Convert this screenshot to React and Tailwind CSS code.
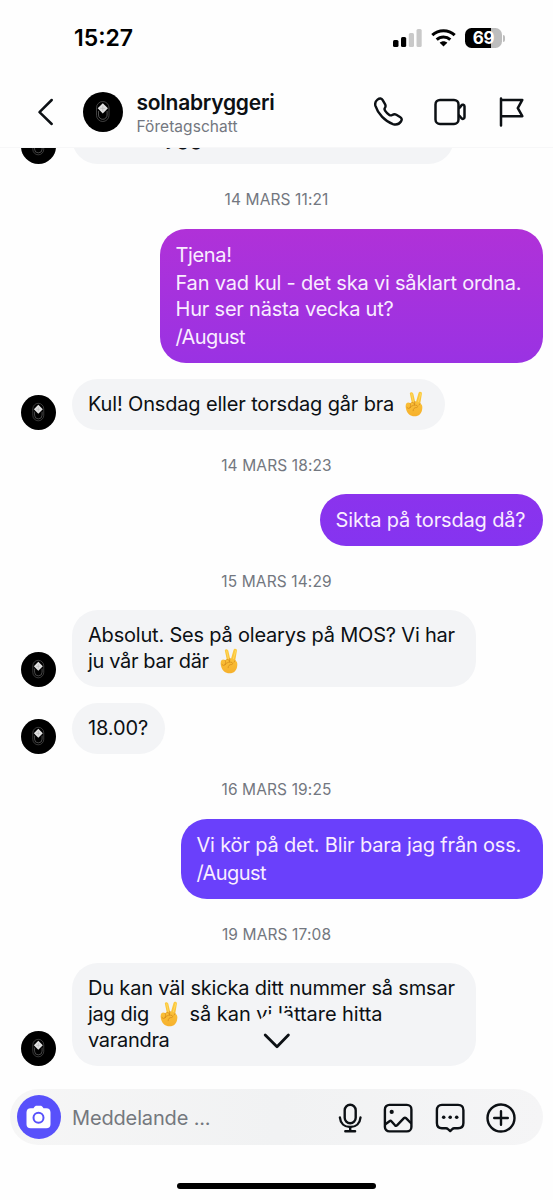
import React from 'react';

const INK = 'stroke-[#0c1014]';

function Peace() {
  return (
    <svg viewBox="0 0 20 28" className="relative -top-[2.5px] mx-[5.5px] -my-1 inline-block h-[26px] w-[18.5px] align-[-4px]" role="img" aria-label="✌️">
      <defs>
        <linearGradient id="skin" x1="0" y1="0" x2="0" y2="1">
          <stop offset="0" stopColor="#fccb40" />
          <stop offset="1" stopColor="#f6b02c" />
        </linearGradient>
      </defs>
      <path
        d="M5.2 2.6C5.700.6 8.400.8 9 3l1.900 8.2 1.100.2L14.600 2C15.300 0 18.700.6 18.300 2.800L16.500 13.400C18.200 14.500 19 16 18.700 18.500 18.300 24 15.200 27.300 10.400 27.300 5.500 27.300 2.600 24.500 1.400 20.500.5 17.500.4 14.500 1.600 13.200 2.700 12 4.500 12.200 5.500 13.200L7.200 11.800Z"
        fill="url(#skin)"
      />
      <path
        d="M10.700 11.200 10.200 15M7.400 12.500C8.500 12 10 12.700 10.100 14.200M5.500 13.200C6.500 14.800 6.300 17 5.200 18.200M2 17.500C3 19.400 5 19.200 5.800 17.600M5.800 17.600C7.500 15.300 10.600 14.600 13 15.600 14.200 16.200 13.700 18 12.300 17.900 10.200 17.700 8.900 19 8.800 21.300M16.300 13.400 15.200 15.200"
        fill="none"
        stroke="#d48a1c"
        strokeWidth="0.8"
        strokeLinecap="round"
      />
      <path d="M7.200 3.200 9 11.500M17 2.800 14.400 11.500" stroke="#ffe06a" strokeWidth="0.8" strokeLinecap="round" fill="none" />
    </svg>
  );
}

function Avatar({ className }) {
  return (
    <svg viewBox="0 0 40 40" className={`shrink-0 ${className}`}>
      <circle cx="20" cy="20" r="20" fill="#000" />
      <rect x="13.500" y="9.500" width="12.500" height="20" rx="6.250" fill="none" stroke="#5c5c5c" strokeWidth="0.700" />
      <path d="M15.500 19v4a4.300 4.300 0 0 0 8.600 0v-4" fill="none" stroke="#8a8a8a" strokeWidth="0.600" />
      <path d="M19.800 11.200 24.900 16.300 19.800 21.400 14.700 16.300Z" fill="#e2e2e2" />
      <path d="M19.800 13.700v5.200M17.300 16.300h5" stroke="#b5b5b5" strokeWidth="0.700" />
    </svg>
  );
}

function Stamp({ children, className = 'h-16' }) {
  return (
    <div className={`flex shrink-0 items-center justify-center pt-[7px] text-[15.5px] text-[#737780] ${className}`}>
      <span className="whitespace-nowrap tracking-[0.12px]">{children}</span>
    </div>
  );
}

function Received({ children, className }) {
  return (
    <div className="flex shrink-0 items-end pl-[21px]">
      <Avatar className="h-[35px] w-[35px]" />
      <div className={`ml-4 rounded-[26px] bg-[#f3f4f6] pl-4 pt-[12px] leading-[26px] text-[#0c1014] ${className}`}>{children}</div>
    </div>
  );
}

function Sent({ children, className }) {
  return (
    <div className="flex shrink-0 justify-end pr-[10px]">
      <div className={`rounded-[26px] pl-[15.5px] pt-[12.5px] leading-[26px] text-[#f9edff] ${className}`}>{children}</div>
    </div>
  );
}

function Line({ children, className = 'tracking-[-0.2px]' }) {
  return <p className={`whitespace-nowrap ${className}`}>{children}</p>;
}

function StatusBar() {
  return (
    <div className="flex h-[76px] shrink-0 items-center justify-between pl-[74px] pr-[48px]">
      <span className="text-[23px] font-semibold leading-none tracking-[0px] text-black">15:27</span>
      <div className="flex items-center">
        <svg viewBox="0 0 29 18" className="h-[18px] w-[29px]">
          <rect x="0" y="11" width="5.500" height="7" rx="1.500" fill="#000" />
          <rect x="8" y="8" width="5.200" height="10" rx="1.500" fill="#000" />
          <rect x="15.800" y="4" width="5.200" height="14" rx="1.500" fill="#c9c9c9" />
          <rect x="23.500" y="0" width="5.200" height="18" rx="1.500" fill="#c9c9c9" />
        </svg>
        <svg viewBox="0 0 25 18" className="ml-[9px] h-[18px] w-[25px]" fill="none" stroke="#000" strokeWidth="3">
          <path d="M1.300 6.200C7.600.2 17.400.2 23.700 6.200" />
          <path d="M5.700 10.700C9.600 7 15.400 7 19.300 10.700" />
          <path d="M12.500 17.500 8.700 13.800C10.800 11.800 14.200 11.800 16.300 13.800Z" fill="#000" stroke="none" />
        </svg>
        <div className="ml-[9px] flex h-[20px] w-[37px] items-center justify-center rounded-[6.5px] bg-linear-to-r from-black from-69% to-[#bdbdbd] to-69%">
          <span className="text-[17px] font-bold leading-none tracking-[-0.3px] text-white">69</span>
        </div>
        <div className="ml-[1px] h-[7px] w-[2px] rounded-r-full bg-[#bdbdbd]" />
      </div>
    </div>
  );
}

function Header() {
  return (
    <header className="flex h-[72px] shrink-0 items-center border-b border-[#f7f7f8] pl-[37px] pr-[29px]">
      <svg viewBox="0 0 17 28" className="h-[28px] w-[17px]" fill="none" strokeWidth="2.500" strokeLinecap="round" strokeLinejoin="round">
        <path className={INK} d="M14.700 2 2.500 14.200 14.700 26" />
      </svg>
      <Avatar className="ml-[29px] h-[40px] w-[40px]" />
      <div className="ml-[13.5px] flex-1 pt-[5px]">
        <h1 className="text-[21px] font-semibold leading-[24px] tracking-[-0.25px] text-[#0c1014]">solnabryggeri</h1>
        <p className="text-[15.5px] leading-[23px] tracking-[0.05px] text-[#737780]">Företagschatt</p>
      </div>
      <svg viewBox="0 0 30 30" className="h-[29px] w-[29px]" fill="none" strokeWidth="2.500" strokeLinejoin="round">
        <path className={INK} d="M3.600 2.700C6 .9 7.800 1.300 9 3.300L11.400 7.300C12.300 8.900 12.200 9.900 11.300 11.200 10.600 12.200 10.700 13 11.400 14 12.500 15.700 14 17.200 15.900 18.500 16.900 19.200 17.800 19.200 18.800 18.600 20.400 17.600 21.500 17.400 23.100 18.300L26.900 20.600C28.800 21.800 29.200 23.500 27.900 25.300 26.100 28 22.900 29 19.600 28 11.500 25.300 4 17.300 1.500 9.200.8 6.600 1.600 4.300 3.600 2.700Z" />
      </svg>
      <svg viewBox="0 0 32 28" className="ml-[31px] mr-px h-[28px] w-[32px]" fill="none" strokeWidth="2.500" strokeLinejoin="round">
        <rect className={INK} x="1.500" y="1.900" width="23" height="24" rx="4.500" />
        <path className={INK} d="M24.500 10.500C26 9.700 26.500 8.700 27.300 7.500 28.300 6.100 30.500 6.700 30.500 8.300V19.300C30.500 20.900 28.300 21.500 27.300 20.100 26.500 18.900 26 17.900 24.500 17.100" />
      </svg>
      <svg viewBox="0 0 25 30" className="ml-[32px] h-[30px] w-[25px]" fill="none" strokeWidth="2.500" strokeLinecap="round" strokeLinejoin="round">
        <path className={INK} d="M2 1.500V28.500M2 2.900H23.300L18.800 11.200 23.300 19.200H2" />
      </svg>
    </header>
  );
}

function Composer() {
  return (
    <div className="mx-[10px] flex h-[56px] shrink-0 items-center rounded-full bg-linear-to-r from-[#f6f6f6] via-[#f1f2f3] to-[#f5f5f6] pl-[6.5px] pr-[27px]">
      <div className="flex h-[44px] w-[44px] items-center justify-center rounded-full bg-[#5851fb]">
        <svg viewBox="0 0 25 24" className="h-[24px] w-[25px]">
          <path fill="#fff" d="M8 2.500C8.800 1.200 9.400.7 10.800.7H14.200C15.600.7 16.200 1.200 17 2.500L17.500 3.300H20.300C23 3.300 24.500 4.800 24.500 7.500V19.200C24.500 21.900 23 23.300 20.300 23.300H4.700C2 23.300.5 21.900.5 19.200V7.500C.5 4.800 2 3.300 4.700 3.300H7.500Z" />
          <circle cx="12.500" cy="12.800" r="5" fill="none" stroke="#5851fb" strokeWidth="2" />
        </svg>
      </div>
      <span className="ml-[11.5px] flex-1 whitespace-nowrap pt-px text-[20px] tracking-[-0.15px] text-[#74787e]">Meddelande ...</span>
      <svg viewBox="0 0 24 30" className="mt-px h-[30px] w-[24px]" fill="none" strokeWidth="2.400" strokeLinecap="round">
        <rect className={INK} x="6.700" y="1.800" width="11" height="18.500" rx="5.500" />
        <path className={INK} d="M1.900 14.500C2.400 20.300 6.400 24 12.200 24S22 20.300 22.500 14.500M12.200 24V28M7.300 28.200H17.100" />
      </svg>
      <svg viewBox="0 0 30 30" className="ml-[21.5px] mt-px h-[30px] w-[30px]" fill="none" strokeWidth="2.400" strokeLinejoin="round">
        <rect className={INK} x="1.900" y="1.900" width="26.500" height="26.500" rx="4.500" />
        <path className={INK} d="M2 21.500 6.500 18.200C7.300 17.600 8 17.800 8.600 18.500L12 22.300C12.700 23 13.400 23 14 22.300L20.900 15.200C21.600 14.500 22.300 14.500 23 15.200L28.300 20.500" />
        <circle cx="8.700" cy="8.900" r="2.100" fill="#0c1014" />
      </svg>
      <svg viewBox="0 0 30 30" className="ml-[21.5px] mt-px h-[30px] w-[30px]" fill="none" strokeWidth="2.400" strokeLinejoin="round">
        <path className={INK} d="M7 1.900H23C26.500 1.900 28.400 3.800 28.400 7.300V20C28.400 23.400 26.500 25.300 23 25.300H19.200C18.400 25.300 17.800 25.600 17.200 26.200L15.200 28.100 13 26.200C12.400 25.600 11.800 25.300 11 25.300H7C3.600 25.300 1.900 23.400 1.900 20V7.300C1.900 3.800 3.600 1.900 7 1.900Z" />
        <g fill="#0c1014">
          <circle cx="8.700" cy="14.200" r="1.800" />
          <circle cx="15.200" cy="14.200" r="1.800" />
          <circle cx="21.700" cy="14.200" r="1.800" />
        </g>
      </svg>
      <svg viewBox="0 0 30 30" className="ml-[21.5px] mt-px h-[30px] w-[30px]" fill="none" strokeWidth="2.400" strokeLinecap="round">
        <circle className={INK} cx="15" cy="15" r="13.500" />
        <path className={INK} d="M15 8.200V21.800M8.200 15H21.800" />
      </svg>
    </div>
  );
}

export default function App() {
  return (
    <div className="flex h-[1200px] w-[553px] flex-col overflow-hidden bg-[#fefefe] font-['Inter','Liberation_Sans',sans-serif]">
      <StatusBar />
      <Header />
      <main className="relative flex h-[941px] shrink-0 flex-col overflow-hidden text-[20px]">
        <div className="-mt-[35px] flex shrink-0 flex-col">
          <Received className="h-[51px] w-[382px]">
            <Line className="pl-[55.5px] tracking-[0.8px]">bryggeri</Line>
          </Received>
        </div>
        <Stamp className="h-[65px]">14 MARS 11:21</Stamp>
        <Sent className="h-[134px] w-[383px] bg-linear-to-b from-[#b031d8] to-[#9a32e3]">
          <Line className="tracking-[-0.35px]">Tjena!</Line>
          <Line className="mt-[2px] tracking-[-0.2px]">Fan vad kul - det ska vi såklart ordna.</Line>
          <Line>Hur ser nästa vecka ut?</Line>
          <Line className="mt-[2px] tracking-[-0.6px]">/August</Line>
        </Sent>
        <div className="h-4 shrink-0" />
        <Received className="h-[51px] w-[373px]">
          <Line className="tracking-[-0.16px]">Kul! Onsdag eller torsdag går bra <Peace /></Line>
        </Received>
        <Stamp>14 MARS 18:23</Stamp>
        <Sent className="h-[52px] w-[223px] bg-linear-to-b from-[#8b33ed] to-[#8534f0]">
          <Line className="tracking-[-0.15px]">Sikta på torsdag då?</Line>
        </Sent>
        <Stamp>15 MARS 14:29</Stamp>
        <Received className="h-[77px] w-[404px]">
          <Line>Absolut. Ses på olearys på MOS? Vi har</Line>
          <Line className="tracking-[-0.35px]">ju vår bar där <Peace /></Line>
        </Received>
        <div className="h-4 shrink-0" />
        <Received className="h-[51px] w-[93px]">
          <Line className="tracking-[-0.1px]">18.00?</Line>
        </Received>
        <Stamp className="h-[65px]">16 MARS 19:25</Stamp>
        <Sent className="h-[80px] w-[362px] bg-[#6a40fb]">
          <Line className="tracking-[-0.18px]">Vi kör på det. Blir bara jag från oss.</Line>
          <Line className="mt-[2px] tracking-[-0.6px]">/August</Line>
        </Sent>
        <Stamp>19 MARS 17:08</Stamp>
        <Received className="h-[103px] w-[404px]">
          <Line className="tracking-[-0.18px]">Du kan väl skicka ditt nummer så smsar</Line>
          <Line className="tracking-[-0.04px]"><span className="tracking-[-0.35px]">jag dig</span> <Peace /> så kan vi lättare hitta</Line>
          <Line className="tracking-[-0.3px]">varandra</Line>
        </Received>
        <div className="absolute bottom-[24px] left-[250.5px] flex h-[52px] w-[52px] items-center justify-center rounded-full bg-[#f3f4f6] pt-[3px]">
          <svg viewBox="0 0 28 18" className="h-[18px] w-[28px]" fill="none" strokeWidth="2.800" strokeLinecap="round" strokeLinejoin="round">
            <path className={INK} d="M2.200 3 14 14.800 25.400 3" />
          </svg>
        </div>
      </main>
      <Composer />
      <div className="flex flex-1 items-end justify-center pb-[11px]">
        <div className="h-[6px] w-[199px] rounded-full bg-black" />
      </div>
    </div>
  );
}
